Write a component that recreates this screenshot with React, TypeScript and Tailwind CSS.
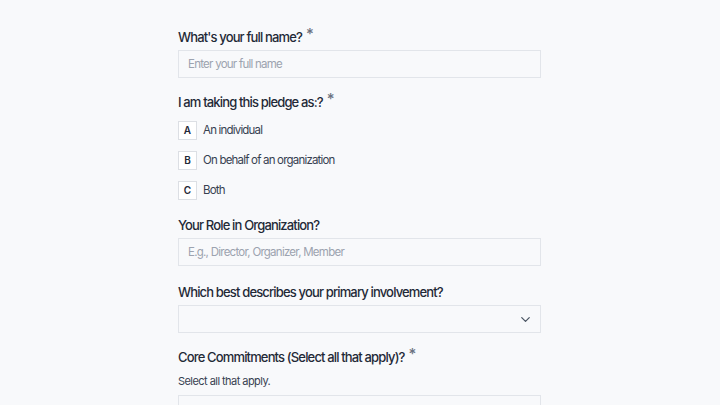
import { ChevronDown } from 'lucide-react'

const options = [
  { key: 'A', label: 'An individual' },
  { key: 'B', label: 'On behalf of an organization' },
  { key: 'C', label: 'Both' },
]

function Label({ text, required }: { text: string; required?: boolean }) {
  return (
    <label className="flex items-start h-5 text-[13px] leading-5 font-medium tracking-[-0.065em] text-[#1f2937]">
      {text}
      {required && <span className="ml-[4px] -mt-[3px] text-[15px] tracking-normal text-[#6b7280]">*</span>}
    </label>
  )
}

function TextInput({ placeholder }: { placeholder: string }) {
  return (
    <input
      placeholder={placeholder}
      className="mt-[3px] h-7 w-full border border-[#e2e5ea] bg-[#f8f9fb] px-[9px] text-[11.5px] tracking-[-0.065em] text-[#374151] placeholder:text-[#9ca3af] outline-none"
    />
  )
}

export default function App() {
  return (
    <div className="min-h-screen bg-[#f8f9fb] font-['Inter','Liberation_Sans',sans-serif]">
      <div className="ml-[178px] w-[363px] pt-[27px] flex flex-col">
        <div className="flex flex-col">
          <Label text="What's your full name?" required />
          <TextInput placeholder="Enter your full name" />
        </div>

        <div className="mt-[14px] flex flex-col">
          <Label text="I am taking this pledge as:?" required />
          <div className="mt-[9px] flex flex-col gap-[11px]">
            {options.map((o) => (
              <div key={o.key} className="flex items-center gap-[6px]">
                <span className="flex h-[19px] w-[19px] items-center justify-center border border-[#dcdfe4] bg-white text-[10px] font-semibold text-[#1f2937]">
                  {o.key}
                </span>
                <span className="text-[11.5px] tracking-[-0.07em] text-[#374151]">{o.label}</span>
              </div>
            ))}
          </div>
        </div>

        <div className="mt-[15px] flex flex-col">
          <Label text="Your Role in Organization?" />
          <TextInput placeholder="E.g., Director, Organizer, Member" />
        </div>

        <div className="mt-[16px] flex flex-col">
          <Label text="Which best describes your primary involvement?" />
          <div className="mt-[3px] flex h-7 w-full items-center justify-end border border-[#e2e5ea] bg-[#f8f9fb] pr-[7px]">
            <ChevronDown className="h-[15px] w-[15px] text-[#4b5563]" strokeWidth={2} />
          </div>
        </div>

        <div className="mt-[14px] flex flex-col">
          <Label text="Core Commitments (Select all that apply)?" required />
          <p className="mt-[6px] text-[11px] leading-4 tracking-[-0.05em] text-[#374151]">Select all that apply.</p>
          <div className="mt-[6px] h-7 w-full border border-[#e2e5ea] bg-[#f8f9fb]" />
        </div>
      </div>
    </div>
  )
}
